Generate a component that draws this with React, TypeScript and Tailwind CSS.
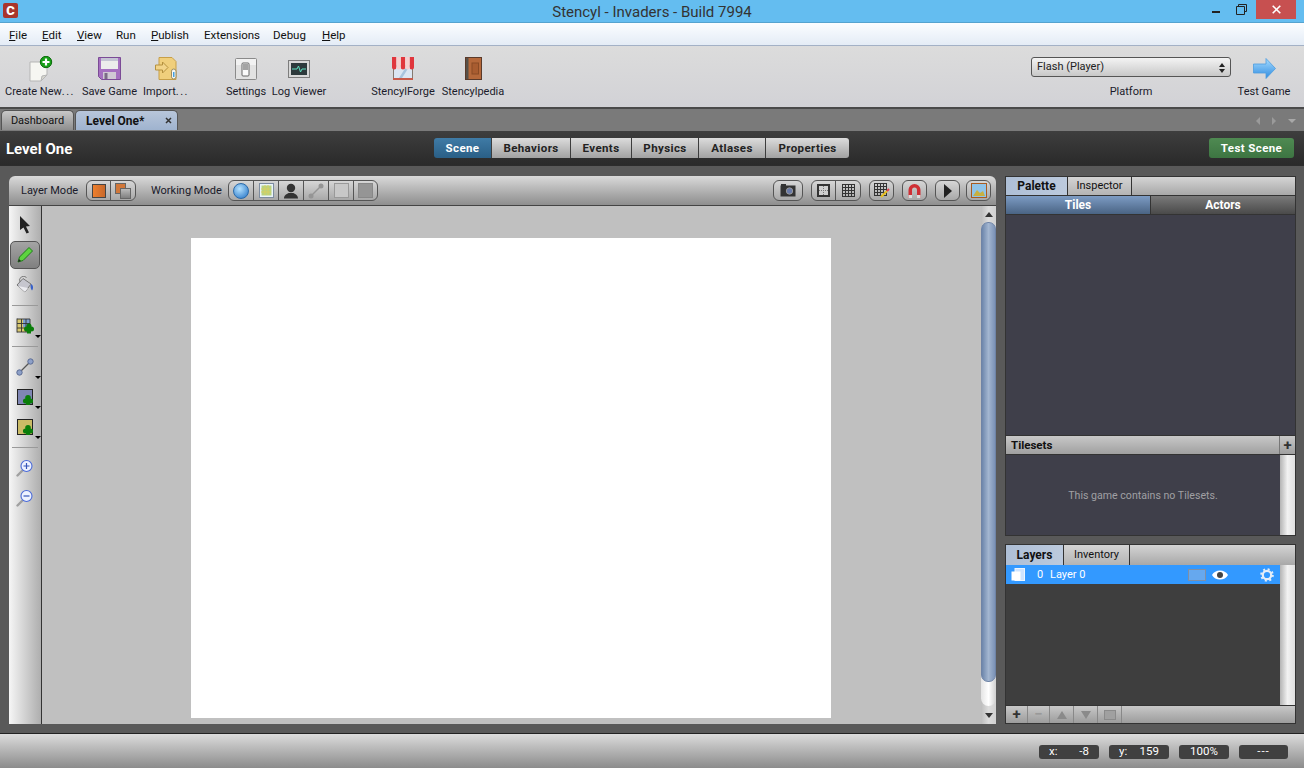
import React from "react";

const F = "font-['Roboto','Open_Sans',sans-serif]";

function CreateIcon() {
  return (
    <svg width="26" height="26" viewBox="0 0 26 26">
      <path d="M3 6h17v13l-6 6H3z" fill="#f6f6f2" stroke="#b5b5b5" />
      <path d="M14 25l1-5 5-1z" fill="#d8d8d0" stroke="#b5b5b5" />
      <circle cx="19" cy="6" r="5.700" fill="#18a018" stroke="#0b6b0b" />
      <path d="M19 2.500v7M15.500 6h7" stroke="#fff" strokeWidth="2.200" />
    </svg>
  );
}
function SaveIcon() {
  return (
    <svg width="23" height="23" viewBox="0 0 23 23">
      <path d="M.5.500h22v22H3.500l-3-3z" fill="#a56fc0" stroke="#7b4b96" />
      <rect x="3" y="1" width="17" height="11" fill="#ececec" />
      <rect x="3" y="1" width="17" height="3" fill="#c4c4d4" />
      <rect x="5" y="15" width="13" height="7" fill="#d0c8d4" />
      <rect x="6.500" y="16" width="3" height="6" fill="#7b6a86" />
    </svg>
  );
}
function ImportIcon() {
  return (
    <svg width="22" height="23" viewBox="0 0 22 23">
      <path d="M4 .500h13l4 4v18H4z" fill="#f0cf7c" stroke="#c79f48" />
      <path d="M.5 8h7V5l5.500 5.500L7.500 16v-3h-7z" fill="#f2d48a" stroke="#b5913f" />
      <rect x="16.500" y="12" width="4.500" height="10" rx="2.200" fill="#f7f7f0" stroke="#9a8a5e" />
      <rect x="18" y="15" width="1.500" height="5" fill="#45a0e0" />
    </svg>
  );
}
function SettingsIcon() {
  return (
    <svg width="22" height="22" viewBox="0 0 22 22">
      <rect x="0.500" y="0.500" width="21" height="21" rx="1" fill="#e2e2e2" stroke="#8a8a8a" />
      <rect x="1" y="1" width="20" height="6" fill="#f2f2f2" />
      <rect x="7" y="5" width="7" height="13" rx="1" fill="#fafafa" stroke="#666" />
      <rect x="8" y="6" width="5" height="6" fill="#a4a4a4" />
    </svg>
  );
}
function LogIcon() {
  return (
    <svg width="22" height="18" viewBox="0 0 22 18">
      <rect x="0.500" y="0.500" width="21" height="17" fill="#d8d8d8" stroke="#7d7d7d" />
      <rect x="3" y="3" width="16" height="12" fill="#2d3a3c" />
      <path d="M4 9h5l1.500-3 2 6 1.500-3h4" fill="none" stroke="#5fe0c0" strokeWidth="1" />
    </svg>
  );
}
function ForgeIcon() {
  return (
    <svg width="22" height="23" viewBox="0 0 22 23">
      <rect x="1.500" y="9" width="19" height="13.500" fill="#dbe6f2" stroke="#857a70" />
      <path d="M7 21l7-11h3L10 21z" fill="#a8c4de" />
      <rect x="1" y="21" width="20" height="2" fill="#c85a4a" />
      <path d="M0 0h4.400v10.500a2.200 2 0 01-4.400 0zM8.800 0h4.400v10.500a2.200 2 0 01-4.400 0zM17.600 0H22v10.500a2.200 2 0 01-4.400 0z" fill="#e0363d" />
      <path d="M4.400 0h4.400v10.500a2.200 2 0 01-4.400 0zM13.200 0h4.400v10.500a2.200 2 0 01-4.400 0z" fill="#f5d0d0" />
    </svg>
  );
}
function PediaIcon() {
  return (
    <svg width="17" height="23" viewBox="0 0 17 23">
      <rect x="0.500" y="0.500" width="16" height="22" fill="#b5683a" stroke="#5b3a2a" />
      <rect x="1" y="1" width="2.500" height="21" fill="#575048" />
      <rect x="7" y="6" width="6.500" height="11" fill="#a85c30" stroke="#8a4a24" />
    </svg>
  );
}
function ArrowIcon() {
  return (
    <svg width="23" height="21" viewBox="0 0 23 21">
      <defs>
        <linearGradient id="arr" x1="0" y1="0" x2="0" y2="1">
          <stop offset="0" stopColor="#a7dcff" />
          <stop offset="1" stopColor="#2e8be0" />
        </linearGradient>
      </defs>
      <path d="M.5 6H13V.5L22.500 10.500 13 20.500V15H.5z" fill="url(#arr)" stroke="#4c9de0" strokeWidth="0.800" />
    </svg>
  );
}

function ToolItem({ w, ml, label, children }: { w: string; ml: string; label: React.ReactNode; children: React.ReactNode }) {
  return (
    <div className={`flex flex-col items-center ${w} ${ml}`}>
      <div className="flex h-[31px] items-center justify-center">{children}</div>
      <span className="whitespace-nowrap text-[11px] leading-[15px] text-[#1b1b2a]">{label}</span>
    </div>
  );
}

function Seg({ w, active, children }: { w: string; active?: boolean; children: React.ReactNode }) {
  return (
    <div
      className={`flex h-full items-center justify-center border-r border-[#3d3d3d] pt-[2px] text-[11.500px] font-bold tracking-[0.4px] last:border-r-0 ${w} ${
        active
          ? "bg-gradient-to-b from-[#3f7ba6] to-[#2a5f86] text-white"
          : "bg-gradient-to-b from-[#dcdcdc] to-[#a2a2a2] text-[#222]"
      }`}
    >
      {children}
    </div>
  );
}

function GroupBtn({ w, children }: { w: string; children?: React.ReactNode }) {
  return <div className={`flex h-full items-center justify-center border-r border-[#555] last:border-r-0 ${w}`}>{children}</div>;
}

function Group({ children }: { children: React.ReactNode }) {
  return (
    <div className="flex h-[21px] overflow-hidden rounded-[6px] border border-[#555] bg-gradient-to-b from-[#d6d6d6] to-[#a8a8a8]">
      {children}
    </div>
  );
}

function Caret() {
  return <div className="absolute bottom-[3px] right-[0px] h-0 w-0 border-x-[3px] border-t-[3px] border-x-transparent border-t-black" />;
}

function Tool({ children, caret, active }: { children: React.ReactNode; caret?: boolean; active?: boolean }) {
  return (
    <div className="relative flex h-[30px] items-center justify-center">
      {active && <div className="absolute inset-x-[1px] inset-y-[1px] rounded-[5px] border border-[#555] bg-gradient-to-b from-[#a4a4a4] to-[#808080]" />}
      <div className="relative flex items-center justify-center">{children}</div>
      {caret && <Caret />}
    </div>
  );
}

function Divider() {
  return <div className="mx-[3px] my-[5px] h-px bg-[#999]" />;
}

function ZoomIcon({ plus }: { plus?: boolean }) {
  return (
    <svg width="18" height="18" viewBox="0 0 18 18">
      <path d="M1.500 16.500L7 11" stroke="#a0a0a0" strokeWidth="2.400" strokeLinecap="round" />
      <circle cx="10.500" cy="7" r="5.500" fill="#eef2ff" stroke="#4a6ad8" strokeWidth="1.100" />
      <path d={plus ? "M7.500 7h6M10.500 4v6" : "M7.500 7h6"} stroke="#3554b8" strokeWidth="1.200" />
    </svg>
  );
}

function AddBlob() {
  return (
    <svg className="absolute -bottom-[1px] -right-[1px]" width="10" height="10" viewBox="0 0 10 10">
      <circle cx="5" cy="2.800" r="2.800" fill="#0a7d0a" />
      <circle cx="2.500" cy="6" r="2.600" fill="#0a7d0a" />
      <circle cx="7.500" cy="6" r="2.600" fill="#0a7d0a" />
      <rect x="3" y="5" width="4" height="5" fill="#0a7d0a" />
    </svg>
  );
}

const gridPath = "M.5 0v13M3.500 0v13M6.500 0v13M9.500 0v13M12.500 0v13M0 .5h13M0 3.500h13M0 6.500h13M0 9.500h13M0 12.500h13";

export default function App() {
  return (
    <div className={`flex h-[768px] w-[1304px] flex-col overflow-hidden bg-[#595959] ${F}`}>
      {/* title bar */}
      <div className="relative flex h-[23px] shrink-0 items-start justify-center border-b border-[#55a3cf] bg-[#64bdf0]">
        <div className="absolute left-[3px] top-[3px] flex h-[15px] w-[15px] items-center justify-center rounded-[2px] bg-[#a9352c] text-[13px] font-black leading-none text-white">
          C
        </div>
        <span className="mt-[2px] text-[15px] leading-[20px] text-[#333]">Stencyl - Invaders - Build 7994</span>
        <div className="absolute right-[8px] top-0 flex h-[19px] items-center">
          <div className="mr-[16px] mt-[5px] h-[2px] w-[8px] bg-[#222]" />
          <svg className="mb-[1px] mr-[9px]" width="11" height="11" viewBox="0 0 11 11">
            <path d="M2.500 2.500V.5h8v7h-2M.5 2.500h8v8h-8z" fill="none" stroke="#222" />
          </svg>
          <div className="flex h-[19px] w-[40px] items-center justify-center bg-[#c75050]">
            <svg width="9" height="9" viewBox="0 0 9 9">
              <path d="M.7.7l7.600 7.600M8.300.7L.7 8.300" stroke="#fff" strokeWidth="1.600" />
            </svg>
          </div>
        </div>
      </div>

      {/* menu bar */}
      <div className="flex h-[23px] shrink-0 items-center border-b border-[#a3b1c6] bg-gradient-to-b from-[#fbfdff] to-[#e4ecf6] pl-[9px] pt-[3px] text-[11.500px] text-[#111]">
        <span className="w-[33px]"><u>F</u>ile</span>
        <span className="w-[35px]"><u>E</u>dit</span>
        <span className="w-[39px]"><u>V</u>iew</span>
        <span className="w-[35px]">Run</span>
        <span className="w-[53px]"><u>P</u>ublish</span>
        <span className="w-[69px]">Extensions</span>
        <span className="w-[49px]">Debug</span>
        <span><u>H</u>elp</span>
      </div>

      {/* toolbar */}
      <div className="flex h-[63px] shrink-0 items-start border-b-2 border-[#4a4a4a] bg-gradient-to-b from-[#dcdcdc] to-[#d2d2d6] pt-[7px]">
        <ToolItem w="w-[70px]" ml="ml-[5px]" label={<>Create New<span className="tracking-[1.5px]">...</span></>}><CreateIcon /></ToolItem>
        <ToolItem w="w-[55px]" ml="ml-[7px]" label="Save Game"><SaveIcon /></ToolItem>
        <ToolItem w="w-[44px]" ml="ml-[7px]" label={<>Import<span className="tracking-[1.5px]">...</span></>}><ImportIcon /></ToolItem>
        <ToolItem w="w-[40px]" ml="ml-[38px]" label="Settings"><SettingsIcon /></ToolItem>
        <ToolItem w="w-[52px]" ml="ml-[7px]" label="Log Viewer"><LogIcon /></ToolItem>
        <ToolItem w="w-[64px]" ml="ml-[46px]" label="StencylForge"><ForgeIcon /></ToolItem>
        <ToolItem w="w-[62px]" ml="ml-[7px]" label="Stencylpedia"><PediaIcon /></ToolItem>
        <div className="flex-1" />
        <div className="flex w-[200px] flex-col items-center">
          <div className="mt-[4px] flex h-[20px] w-full items-center justify-between rounded-[3px] border border-[#555] bg-gradient-to-b from-[#f4f4f4] to-[#c8c8c8] px-[5px] pt-[1px] text-[11px] text-[#222]">
            <span>Flash (Player)</span>
            <span className="flex flex-col gap-[2px]">
              <span className="h-0 w-0 border-x-[3px] border-b-[4px] border-x-transparent border-b-[#222]" />
              <span className="h-0 w-0 border-x-[3px] border-t-[4px] border-x-transparent border-t-[#222]" />
            </span>
          </div>
          <span className="mt-[7px] text-[11px] leading-[15px] text-[#1b1b2a]">Platform</span>
        </div>
        <ToolItem w="w-[52px]" ml="ml-[7px]" label="Test Game"><ArrowIcon /></ToolItem>
        <div className="w-[14px]" />
      </div>

      {/* tabs */}
      <div className="flex h-[22px] shrink-0 items-end bg-[#7a7a7a] pb-[1px] pl-[1px]">
        <div className="flex h-[20px] w-[73px] items-center justify-center rounded-t-[5px] border border-b-0 border-[#555] bg-gradient-to-b from-[#c8c8c8] to-[#8e8e8e] pt-[1px] text-[11px] text-[#111]">
          Dashboard
        </div>
        <div className="ml-[1px] flex h-[20px] w-[103px] items-center justify-between rounded-t-[5px] border border-b-0 border-[#555] bg-gradient-to-b from-[#b8c6da] to-[#9fb3cf] pl-[10px] pr-[5px] text-[12px] font-bold text-[#111]">
          <span>Level One*</span>
          <svg width="7" height="7" viewBox="0 0 7 7"><path d="M1 1l5 5M6 1L1 6" stroke="#333" strokeWidth="1.500" /></svg>
        </div>
        <div className="flex-1" />
        <div className="mb-[5px] mr-[8px] flex items-center gap-[12px]">
          <span className="h-0 w-0 border-y-[4px] border-r-[4px] border-y-transparent border-r-[#9a9a9a]" />
          <span className="h-0 w-0 border-y-[4px] border-l-[4px] border-y-transparent border-l-[#9a9a9a]" />
          <span className="h-0 w-0 border-x-[4px] border-t-[4px] border-x-transparent border-t-[#a8a8a8]" />
        </div>
      </div>

      {/* scene title bar */}
      <div className="flex h-[35px] shrink-0 items-center border-b border-[#2c2c2c] bg-gradient-to-b from-[#3e3e3e] to-[#2a2a2a]">
        <div className="w-[434px] pl-[6px] pt-[3px] text-[15px] font-bold text-white">Level One</div>
        <div className="flex h-[20px] overflow-hidden rounded-[3px]">
          <Seg w="w-[58px]" active>Scene</Seg>
          <Seg w="w-[79px]">Behaviors</Seg>
          <Seg w="w-[61px]">Events</Seg>
          <Seg w="w-[67px]">Physics</Seg>
          <Seg w="w-[67px]">Atlases</Seg>
          <Seg w="w-[83px]">Properties</Seg>
        </div>
        <div className="flex-1" />
        <div className="mr-[10px] flex h-[20px] w-[85px] items-center justify-center rounded-[3px] bg-gradient-to-b from-[#4f8a52] to-[#3d7542] pt-[2px] text-[11.500px] font-bold tracking-[0.4px] text-white">
          Test Scene
        </div>
      </div>

      {/* main */}
      <div className="flex min-h-0 flex-1 gap-[9px] pb-[9px] pl-[9px] pr-[8px] pt-[10px]">
        {/* scene editor */}
        <div className="flex w-[987px] flex-col overflow-hidden rounded-t-[6px]">
          <div className="flex h-[30px] shrink-0 items-center border-b border-[#444] bg-gradient-to-b from-[#dadada] to-[#8e8e8e] pl-[12px] pr-[5px] text-[11px] text-[#1a1a2a]">
            <span className="w-[65px] whitespace-nowrap pt-[1px]">Layer Mode</span>
            <Group>
              <GroupBtn w="w-[24px]">
                <div className="h-[14px] w-[14px] border border-[#444] bg-gradient-to-r from-[#ee7f2d] to-[#c8682a]" />
              </GroupBtn>
              <GroupBtn w="w-[24px]">
                <div className="relative h-[16px] w-[16px]">
                  <div className="absolute left-0 top-0 h-[11px] w-[11px] border border-[#666] bg-[#d0773a]" />
                  <div className="absolute bottom-0 right-0 h-[11px] w-[11px] border border-[#666] bg-gradient-to-b from-[#bbb] to-[#808080]" />
                </div>
              </GroupBtn>
            </Group>
            <span className="ml-[15px] w-[77px] whitespace-nowrap pt-[1px]">Working Mode</span>
            <Group>
              <GroupBtn w="w-[25px]">
                <div className="h-[16px] w-[16px] rounded-full border border-[#2a6aa8] bg-[radial-gradient(circle_at_40%_35%,#b4e2ff,#1f6fc4)]" />
              </GroupBtn>
              <GroupBtn w="w-[25px]">
                <svg width="15" height="15" viewBox="0 0 15 15">
                  <rect x="0.500" y="0.500" width="14" height="14" fill="#eaf4fa" stroke="#7d8ca0" />
                  <rect x="2.500" y="2.500" width="10" height="10" fill="#b8d280" />
                  <path d="M2 6h10M2 9h10M6 2v10M9 2v10" stroke="#d8d060" />
                </svg>
              </GroupBtn>
              <GroupBtn w="w-[25px]">
                <svg width="16" height="16" viewBox="0 0 16 16">
                  <circle cx="8" cy="5" r="4.200" fill="#333" />
                  <path d="M1 15.500c0-3.500 3-4.500 4.500-5.500h5c1.500 1 4.500 2 4.500 5.500z" fill="#333" />
                </svg>
              </GroupBtn>
              <GroupBtn w="w-[25px]">
                <svg width="16" height="16" viewBox="0 0 16 16">
                  <path d="M3 13L13 3" stroke="#959595" strokeWidth="1.500" />
                  <circle cx="3" cy="13" r="2.500" fill="#959595" />
                  <circle cx="13" cy="3" r="2.500" fill="#959595" />
                </svg>
              </GroupBtn>
              <GroupBtn w="w-[25px]">
                <div className="h-[15px] w-[15px] border border-[#999] bg-[#c8c8c8]" />
              </GroupBtn>
              <GroupBtn w="w-[23px]">
                <div className="h-[15px] w-[15px] border border-[#888] bg-[#959595]" />
              </GroupBtn>
            </Group>
            <div className="flex-1" />
            <Group>
              <GroupBtn w="w-[28px]">
                <svg width="16" height="13" viewBox="0 0 16 13">
                  <rect x="0.500" y="1.500" width="15" height="11" fill="#333" />
                  <rect x="1" y="0" width="5" height="2" fill="#333" />
                  <circle cx="9.500" cy="7" r="3.200" fill="#6a7aa8" stroke="#999" />
                </svg>
              </GroupBtn>
            </Group>
            <div className="w-[8px]" />
            <Group>
              <GroupBtn w="w-[24px]">
                <svg width="13" height="13" viewBox="0 0 13 13">
                  <rect x="0" y="0" width="13" height="13" fill="#333" />
                  <rect x="2" y="2" width="9" height="9" fill="#cfcfcf" />
                  <path d="M6.500 2v9M2 6.500h9" stroke="#777" strokeDasharray="1 1" />
                </svg>
              </GroupBtn>
              <GroupBtn w="w-[24px]">
                <svg width="13" height="13" viewBox="0 0 13 13"><path d={gridPath} stroke="#333" /></svg>
              </GroupBtn>
            </Group>
            <div className="w-[8px]" />
            <Group>
              <GroupBtn w="w-[23px]">
                <svg width="16" height="15" viewBox="0 0 16 15">
                  <path d={gridPath} stroke="#333" />
                  <path d="M7 14l6-6" stroke="#e8c020" strokeWidth="2" />
                  <path d="M13 8l2-2" stroke="#e04050" strokeWidth="2" />
                </svg>
              </GroupBtn>
            </Group>
            <div className="w-[8px]" />
            <Group>
              <GroupBtn w="w-[23px]">
                <svg width="15" height="16" viewBox="0 0 15 16">
                  <path d="M1.500 15V7a6 6 0 0112 0v8h-3.500V7a2.500 2.500 0 00-5 0v8z" fill="#cf2f35" />
                  <path d="M1.500 12h3.500v3H1.500zM10 12h3.500v3H10z" fill="#ddd" />
                </svg>
              </GroupBtn>
            </Group>
            <div className="w-[8px]" />
            <Group>
              <GroupBtn w="w-[23px]">
                <svg width="10" height="14" viewBox="0 0 10 14"><path d="M1 0l8 7-8 7z" fill="#222" /></svg>
              </GroupBtn>
            </Group>
            <div className="w-[6px]" />
            <Group>
              <GroupBtn w="w-[23px]">
                <svg width="16" height="15" viewBox="0 0 16 15">
                  <rect x="0.500" y="0.500" width="15" height="14" fill="#8fc3e8" stroke="#a85a20" />
                  <path d="M2 13l4-6 3 3 3-2 2 5z" fill="#c8b040" />
                </svg>
              </GroupBtn>
            </Group>
          </div>
          <div className="flex min-h-0 flex-1">
            {/* left tools */}
            <div className="w-[33px] shrink-0 border-r border-[#333] bg-gradient-to-r from-[#f6f6f6] to-[#aeaeae] pt-[4px]">
              <Tool>
                <svg width="14" height="18" viewBox="0 0 14 18"><path d="M2 0l10 10-4 .5 3 6-2.500 1-3-6L2 14z" fill="#222" /></svg>
              </Tool>
              <Tool active>
                <svg width="18" height="18" viewBox="0 0 18 18">
                  <path d="M2 16l1.500-5L13 1.500 16.500 5 7 14.500z" fill="#5dd43f" stroke="#1f7d1a" />
                  <path d="M2 16l1-3 2 2z" fill="#222" />
                </svg>
              </Tool>
              <Tool>
                <svg width="18" height="18" viewBox="0 0 18 18">
                  <path d="M1 9l6-6.500L15 8l-6 8z" fill="#c6c6ce" stroke="#777" />
                  <path d="M4 6a4 4 0 016.500-4.500" fill="none" stroke="#777" />
                  <path d="M2 10l7 6 3-4z" fill="#ececf0" />
                  <path d="M15 8c2.500 1 2.500 5 1 6.500-1.200-1.500-2-4-1-6.500z" fill="#3860c8" />
                </svg>
              </Tool>
              <Divider />
              <Tool caret>
                <svg width="18" height="17" viewBox="0 0 18 17">
                  <rect x="1" y="1" width="13" height="13" fill="#d8c870" />
                  <rect x="7" y="1" width="7" height="8" fill="#7ea0d0" />
                  <path d="M1 .5v14M5.500 1v13M10 1v13M14 1v13M1 1h13M1 5.500h13M1 10h13M1 14h13" stroke="#333" strokeWidth="0.900" />
                  <circle cx="13" cy="8" r="2.500" fill="#0a7d0a" />
                  <circle cx="10.500" cy="11" r="2.500" fill="#0a7d0a" />
                  <circle cx="15.500" cy="11" r="2.500" fill="#0a7d0a" />
                  <rect x="11" y="11" width="4" height="4.500" fill="#0a7d0a" />
                </svg>
              </Tool>
              <Divider />
              <Tool caret>
                <svg width="18" height="18" viewBox="0 0 18 18">
                  <path d="M4 14L14 4" stroke="#555" strokeWidth="1.200" />
                  <circle cx="3.500" cy="14.500" r="2.700" fill="#8da0c8" stroke="#5c6c94" />
                  <circle cx="14.500" cy="3.500" r="2.700" fill="#8da0c8" stroke="#5c6c94" />
                </svg>
              </Tool>
              <Tool caret>
                <div className="relative h-[16px] w-[16px] border border-[#222] bg-[#7f86b4]"><AddBlob /></div>
              </Tool>
              <Tool caret>
                <div className="relative h-[16px] w-[16px] border border-[#222] bg-[#cabb66]"><AddBlob /></div>
              </Tool>
              <Divider />
              <Tool><ZoomIcon plus /></Tool>
              <Tool><ZoomIcon /></Tool>
            </div>
            {/* canvas */}
            <div className="min-w-0 flex-1 bg-[#c0c0c0] pl-[149px] pt-[32px]">
              <div className="h-[480px] w-[640px] bg-white" />
            </div>
            {/* scrollbar */}
            <div className="flex w-[15px] shrink-0 flex-col bg-gradient-to-r from-[#bdbdbd] via-[#dcdcdc] to-[#d0d0d0]">
              <div className="flex h-[16px] items-center justify-center">
                <span className="h-0 w-0 border-x-[4px] border-b-[5px] border-x-transparent border-b-[#333]" />
              </div>
              <div className="flex flex-1 flex-col rounded-full bg-gradient-to-r from-[#e4e4e4] via-white to-[#cfcfcf]">
                <div className="h-[460px] rounded-[7px] border border-[#6f84a6] bg-gradient-to-r from-[#6d86ab] via-[#a3b6d0] to-[#7b92b6]" />
              </div>
              <div className="flex h-[18px] items-center justify-center">
                <span className="h-0 w-0 border-x-[4px] border-t-[5px] border-x-transparent border-t-[#333]" />
              </div>
            </div>
          </div>
        </div>

        {/* right panels */}
        <div className="flex w-[291px] flex-col">
          <div className="flex h-[360px] flex-col border border-[#333] bg-[#3f3f4a]">
            <div className="flex h-[18px] shrink-0 text-[11px] text-[#111]">
              <div className="flex w-[62px] items-center justify-center border-r border-[#333] bg-gradient-to-r from-[#aebfd6] to-[#bccadd] text-[12px] font-bold">Palette</div>
              <div className="flex w-[64px] items-center justify-center border-r border-[#333] bg-gradient-to-b from-[#d4d4d4] to-[#b4b4b4]">Inspector</div>
              <div className="flex-1 bg-gradient-to-b from-[#d4d4d4] to-[#a8a8a8]" />
            </div>
            <div className="flex h-[20px] shrink-0 border-y border-[#333] text-[12px] font-bold text-white">
              <div className="flex w-[145px] items-center justify-center border-r border-[#333] bg-gradient-to-b from-[#7d9cc4] to-[#4a6484]">Tiles</div>
              <div className="flex flex-1 items-center justify-center bg-gradient-to-b from-[#7a7a7a] to-[#4a4a4a]">Actors</div>
            </div>
            <div className="flex-1" />
            <div className="flex h-[20px] shrink-0 border-y border-[#333] bg-gradient-to-b from-[#c8c8c8] to-[#a0a0a0] pl-[5px] text-[11.500px] font-bold text-[#111]">
              <div className="flex flex-1 items-center pt-[1px]">Tilesets</div>
              <div className="flex w-[16px] items-center justify-center border-l border-[#777] text-[15px] font-bold leading-none text-[#333]">+</div>
            </div>
            <div className="flex h-[80px] shrink-0">
              <div className="flex flex-1 items-center justify-center pt-[2px] text-[10.600px] text-[#a0a0a4]">This game contains no Tilesets.</div>
              <div className="w-[15px] bg-gradient-to-r from-[#b4b4b4] via-[#f2f2f2] to-[#e0e0e0]" />
            </div>
          </div>
          <div className="mt-[8px] flex min-h-0 flex-1 flex-col border border-[#333] bg-[#3e3e3e]">
            <div className="flex h-[20px] shrink-0 text-[11px] text-[#111]">
              <div className="flex w-[58px] items-center justify-center border-r border-[#333] bg-gradient-to-r from-[#aebfd6] to-[#bccadd] text-[12px] font-bold">Layers</div>
              <div className="flex w-[66px] items-center justify-center border-r border-[#333] bg-gradient-to-b from-[#d4d4d4] to-[#b4b4b4]">Inventory</div>
              <div className="flex-1 bg-gradient-to-b from-[#d4d4d4] to-[#a8a8a8]" />
            </div>
            <div className="flex min-h-0 flex-1">
              <div className="min-w-0 flex-1">
                <div className="flex h-[19px] items-center bg-[#3399ff] pl-[5px] text-[11px] text-white">
                  <svg className="shrink-0" width="14" height="13" viewBox="0 0 14 13">
                    <rect x="4" y="0.500" width="9.500" height="12" fill="#cfe4ff" stroke="#eef6ff" />
                    <rect x="0.500" y="3.500" width="9" height="9" fill="#fff" />
                  </svg>
                  <span className="ml-[12px] w-[13px] shrink-0 pt-[1px]">0</span>
                  <span className="w-[138px] shrink-0 whitespace-nowrap pt-[1px]">Layer 0</span>
                  <div className="h-[12px] w-[18px] shrink-0 border border-[#7f8fa6] bg-[#66a8ee]" />
                  <svg className="ml-[6px] shrink-0" width="16" height="10" viewBox="0 0 16 10">
                    <path d="M0 5c3-6 13-6 16 0-3 6-13 6-16 0z" fill="#fff" />
                    <circle cx="8" cy="5" r="3" fill="#444" />
                  </svg>
                  <svg className="ml-[32px] shrink-0" width="14" height="14" viewBox="0 0 14 14">
                    <circle cx="7" cy="7" r="4.200" fill="none" stroke="#e6eef8" strokeWidth="2.200" />
                    <circle cx="7" cy="7" r="5.800" fill="none" stroke="#e6eef8" strokeWidth="2" strokeDasharray="2 2.550" />
                  </svg>
                </div>
              </div>
              <div className="w-[15px] bg-gradient-to-r from-[#b4b4b4] via-[#f2f2f2] to-[#e0e0e0]" />
            </div>
            <div className="flex h-[18px] shrink-0 items-stretch border-t border-[#333] bg-gradient-to-b from-[#c8c8c8] to-[#9c9c9c]">
              <div className="flex w-[22px] items-center justify-center border-r border-[#888] text-[15px] font-bold leading-none text-[#333]">+</div>
              <div className="flex w-[22px] items-center justify-center border-r border-[#888] text-[15px] font-bold leading-none text-[#999]">−</div>
              <div className="flex w-[24px] items-center justify-center border-r border-[#888]">
                <span className="h-0 w-0 border-x-[5px] border-b-[8px] border-x-transparent border-b-[#8a8a8a]" />
              </div>
              <div className="flex w-[24px] items-center justify-center border-r border-[#888]">
                <span className="h-0 w-0 border-x-[5px] border-t-[8px] border-x-transparent border-t-[#8a8a8a]" />
              </div>
              <div className="flex w-[24px] items-center justify-center border-r border-[#888]">
                <div className="h-[10px] w-[12px] border border-[#8a8a8a] bg-[#a0a0a0]" />
              </div>
            </div>
          </div>
        </div>
      </div>

      {/* status bar */}
      <div className="flex h-[35px] shrink-0 items-center justify-end gap-[10px] border-t border-[#222] bg-gradient-to-b from-[#dcdcdc] to-[#8c8c8c] pr-[16px] pt-[1px] text-[11.500px] text-white">
        <div className="flex h-[14px] w-[60px] items-center justify-between rounded-[3px] bg-[#404040] pl-[10px] pr-[10px]"><span>x:</span><span>-8</span></div>
        <div className="flex h-[14px] w-[60px] items-center justify-between rounded-[3px] bg-[#404040] pl-[10px] pr-[10px]"><span>y:</span><span>159</span></div>
        <div className="flex h-[14px] w-[50px] items-center justify-center rounded-[3px] bg-[#404040]">100%</div>
        <div className="flex h-[14px] w-[49px] items-center justify-center rounded-[3px] bg-[#404040] tracking-[1px]">---</div>
      </div>
    </div>
  );
}
